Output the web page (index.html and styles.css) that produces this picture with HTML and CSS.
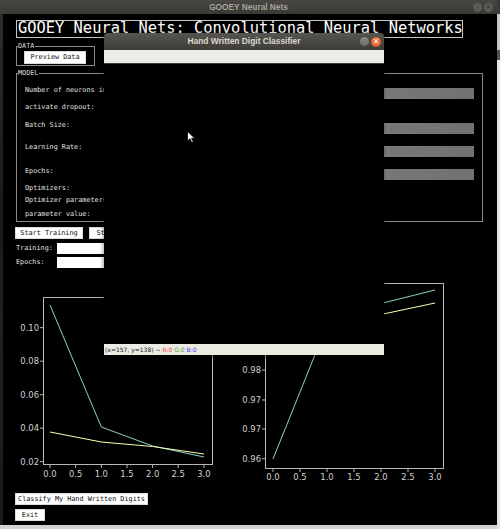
FILE: index.html
```html
<!DOCTYPE html>
<html>
<head>
<meta charset="utf-8">
<title>GOOEY Neural Nets</title>
<link rel="stylesheet" href="styles.css">
</head>
<body>
<div class="screen">
  <div class="main-col">
    <header class="titlebar">
      <span></span>
      <span class="title">GOOEY Neural Nets</span>
      <span class="wbtns"><span class="wbtn">&#8211;</span><span class="wbtn">&#215;</span></span>
    </header>
    <div class="win">
      <div class="edge-left"></div>
      <main class="content">
        <h1 class="heading">GOOEY Neural Nets: Convolutional Neural Networks</h1>

        <section class="frame data-frame">
          <span class="legend">DATA</span>
          <button class="btn preview">Preview Data</button>
        </section>

        <section class="frame model-frame">
          <span class="legend">MODEL</span>
          <div class="row h17"><span class="lbl">Number of neurons in hidden layer:</span><span class="bar"></span></div>
          <div class="row h18"><span class="lbl">activate dropout:</span></div>
          <div class="row h22"><span class="lbl">Batch Size:</span><span class="bar"></span></div>
          <div class="row h24"><span class="lbl">Learning Rate:</span><span class="bar low"></span></div>
          <div class="row h17"><span class="lbl">Epochs:</span><span class="bar"></span></div>
          <div class="row h12"><span class="lbl">Optimizers:</span></div>
          <div class="row h14"><span class="lbl">Optimizer parameters:</span></div>
          <div class="row h12"><span class="lbl">parameter value:</span></div>
        </section>

        <div class="actions">
          <button class="btn start">Start Training</button>
          <button class="btn start">Stop Training</button>
        </div>

        <div class="progress first"><span class="plabel">Training:</span><span class="pbox"></span></div>
        <div class="progress"><span class="plabel">Epochs:</span><span class="pbox"></span></div>

        <div class="charts">
          <svg class="chart" width="230" height="214" viewBox="0 0 230 214">
            <rect x="40.5" y="29.5" width="169" height="167" fill="none" stroke="#b8b8b8" stroke-width="1"/>
            <g stroke="#b8b8b8" stroke-width="1">
              <line x1="37" y1="193.7" x2="40" y2="193.7"/>
              <line x1="37" y1="160.2" x2="40" y2="160.2"/>
              <line x1="37" y1="126.7" x2="40" y2="126.7"/>
              <line x1="37" y1="93.2" x2="40" y2="93.2"/>
              <line x1="37" y1="59.7" x2="40" y2="59.7"/>
              <line x1="47" y1="197" x2="47" y2="200"/>
              <line x1="72.6" y1="197" x2="72.6" y2="200"/>
              <line x1="98.3" y1="197" x2="98.3" y2="200"/>
              <line x1="124" y1="197" x2="124" y2="200"/>
              <line x1="149.6" y1="197" x2="149.6" y2="200"/>
              <line x1="175.2" y1="197" x2="175.2" y2="200"/>
              <line x1="200.9" y1="197" x2="200.9" y2="200"/>
            </g>
            <g class="tick" text-anchor="end">
              <text x="36" y="196.7">0.02</text>
              <text x="36" y="163.2">0.04</text>
              <text x="36" y="129.7">0.06</text>
              <text x="36" y="96.2">0.08</text>
              <text x="36" y="62.7">0.10</text>
            </g>
            <g class="tick" text-anchor="middle">
              <text x="47" y="209">0.0</text>
              <text x="72.6" y="209">0.5</text>
              <text x="98.3" y="209">1.0</text>
              <text x="124" y="209">1.5</text>
              <text x="149.6" y="209">2.0</text>
              <text x="175.2" y="209">2.5</text>
              <text x="200.9" y="209">3.0</text>
            </g>
            <polyline points="47,37 98.3,159 149.6,178 201,189" fill="none" stroke="#8dd3c7" stroke-width="1"/>
            <polyline points="47,164 98.3,174 149.6,178.5 201,186" fill="none" stroke="#feffb3" stroke-width="1"/>
          </svg>
          <svg class="chart" width="264" height="214" viewBox="0 0 264 214">
            <rect x="32.5" y="15.5" width="178" height="185" fill="none" stroke="#b8b8b8" stroke-width="1"/>
            <g stroke="#b8b8b8" stroke-width="1">
              <line x1="29" y1="102" x2="32" y2="102"/>
              <line x1="29" y1="132" x2="32" y2="132"/>
              <line x1="29" y1="161" x2="32" y2="161"/>
              <line x1="29" y1="190.7" x2="32" y2="190.7"/>
              <line x1="40" y1="201" x2="40" y2="204"/>
              <line x1="67" y1="201" x2="67" y2="204"/>
              <line x1="94" y1="201" x2="94" y2="204"/>
              <line x1="121" y1="201" x2="121" y2="204"/>
              <line x1="148" y1="201" x2="148" y2="204"/>
              <line x1="175" y1="201" x2="175" y2="204"/>
              <line x1="202" y1="201" x2="202" y2="204"/>
            </g>
            <g class="tick" text-anchor="end">
              <text x="28" y="105">0.98</text>
              <text x="28" y="135">0.97</text>
              <text x="28" y="164">0.97</text>
              <text x="28" y="193.7">0.96</text>
            </g>
            <g class="tick" text-anchor="middle">
              <text x="40" y="212">0.0</text>
              <text x="67" y="212">0.5</text>
              <text x="94" y="212">1.0</text>
              <text x="121" y="212">1.5</text>
              <text x="148" y="212">2.0</text>
              <text x="175" y="212">2.5</text>
              <text x="202" y="212">3.0</text>
            </g>
            <polyline points="40,191 94,57 148,35.5 202,22" fill="none" stroke="#8dd3c7" stroke-width="1"/>
            <polyline points="40,70 94,55 148,46.5 202,35" fill="none" stroke="#feffb3" stroke-width="1"/>
          </svg>
        </div>

        <button class="btn classify">Classify My Hand Written Digits</button>
        <button class="btn exit">Exit</button>
      </main>
    </div>
    <div class="bottom-edge"></div>
  </div>
  <div class="edge-right"></div>
</div>

<div class="dialog">
  <div class="dtitle">
    <span></span>
    <span class="dname">Hand Written Digit Classifier</span>
    <span class="dbtns"><span class="dmin"></span><span class="dclose">&#215;</span></span>
  </div>
  <div class="dtool"></div>
  <div class="dcanvas"></div>
  <div class="dstatus">(x=157, y=138) ~ <span class="cr">R:0</span> <span class="cg">G:0</span> <span class="cb">B:0</span></div>
</div>

<svg class="cursor" width="9" height="13" viewBox="0 0 9 13">
  <path d="M0.5 0.5 L0.5 10 L3 7.8 L4.8 11.8 L6.3 11.1 L4.6 7.3 L7.8 7.3 Z" fill="#ffffff" stroke="#000000" stroke-width="0.8"/>
</svg>
</body>
</html>
```

FILE: styles.css
```css
html, body {
  margin: 0;
  padding: 0;
}
body {
  width: 500px;
  height: 529px;
  overflow: hidden;
  position: relative;
  background: #d7d6d1;
  font-family: "DejaVu Sans Mono", monospace;
}
.screen {
  display: flex;
  height: 529px;
}
.main-col {
  width: 497px;
  display: flex;
  flex-direction: column;
}
.titlebar {
  height: 14px;
  flex: none;
  display: grid;
  grid-template-columns: 1fr auto 1fr;
  align-items: center;
  background: linear-gradient(#47463f, #3a3935);
}
.title {
  font-family: "Liberation Sans", Arial, sans-serif;
  font-weight: bold;
  font-size: 8.3px;
  color: #a6a5a0;
  line-height: 14px;
}
.wbtns {
  justify-self: end;
  display: flex;
  gap: 2px;
  padding-right: 4px;
}
.wbtn {
  width: 9px;
  height: 9px;
  border-radius: 50%;
  background: #5c5b56;
  color: #3d3c38;
  font-family: "DejaVu Sans", sans-serif;
  font-size: 7px;
  line-height: 9px;
  text-align: center;
  font-weight: bold;
}
.win {
  flex: 1;
  display: flex;
  background: #000;
}
.bottom-edge {
  height: 4px;
  flex: none;
  background: #d3d2cd;
}
.edge-left {
  width: 3px;
  flex: none;
  background: linear-gradient(#2c2c2c, #1a1a1a 40%, #262020 60%, #1a1a1a);
}
.edge-right {
  width: 3px;
  background: linear-gradient(#3a3935 0, #3a3935 14px, #c9c8c3 14px, #c9c8c3 50px, #53524e 50px, #53524e 60px, #e4e3de 60px);
}
.content {
  flex: 1;
  display: flex;
  flex-direction: column;
  align-items: flex-start;
  color: #e6e6e6;
}
.heading {
  margin: 6px 0 0 13px;
  box-sizing: border-box;
  width: 447px;
  height: 18px;
  border: 1px solid #c8c8c8;
  font-family: "DejaVu Sans Mono", monospace;
  font-weight: normal;
  font-size: 15.4px;
  line-height: 15px;
  color: #ffffff;
  padding-left: 1px;
  white-space: nowrap;
  overflow: hidden;
}
.frame {
  position: relative;
  box-sizing: border-box;
  border: 1px solid #8a8a8a;
}
.legend {
  position: absolute;
  top: -5px;
  left: 1px;
  background: #000;
  color: #dddddd;
  font-size: 6.8px;
  line-height: 8px;
  padding: 0 1px 0 0;
}
.data-frame {
  margin: 8px 0 0 13px;
  width: 79px;
  height: 20px;
  padding: 4px 0 0 7px;
}
.btn {
  box-sizing: border-box;
  background: #ffffff;
  border: 1px solid #dcdcdc;
  color: #111;
  font-family: "DejaVu Sans Mono", monospace;
  font-size: 6.8px;
  padding: 0;
  margin: 0;
  text-align: center;
  white-space: nowrap;
  overflow: hidden;
  display: block;
}
.preview {
  width: 62px;
  height: 13px;
  line-height: 11px;
}
.model-frame {
  margin: 7px 0 0 13px;
  width: 467px;
  height: 149px;
  padding: 10px 8px 0 8px;
  display: flex;
  flex-direction: column;
}
.row {
  display: flex;
  justify-content: space-between;
  align-items: flex-start;
}
.lbl {
  font-size: 6.8px;
  line-height: 12px;
  color: #e0e0e0;
  white-space: nowrap;
}
.h12 { height: 12px; }
.h14 { height: 14px; }
.h17 { height: 17px; }
.h18 { height: 18px; }
.h22 { height: 22px; }
.h24 { height: 24px; }
.bar {
  width: 90px;
  height: 11px;
  margin-top: 4px;
  background: linear-gradient(90deg, #8c8c8c, #767676 6px, #727272);
}
.bar.low {
  margin-top: 5px;
}
.actions {
  margin: 5px 0 0 12px;
  display: flex;
  gap: 6px;
}
.start {
  width: 68px;
  height: 12px;
  line-height: 10px;
}
.progress {
  margin: 3px 0 0 13px;
  display: flex;
  align-items: center;
  height: 11px;
}
.progress.first {
  margin-top: 4px;
}
.plabel {
  width: 41px;
  font-size: 6.8px;
  line-height: 11px;
  color: #e0e0e0;
}
.pbox {
  width: 110px;
  height: 11px;
  background: #ffffff;
}
.charts {
  display: flex;
  height: 214px;
}
.chart {
  display: block;
  flex: none;
}
.tick {
  font-family: "DejaVu Sans", sans-serif;
  font-size: 8.4px;
  fill: #d2d2d2;
}
.classify {
  margin: 11px 0 0 12px;
  width: 133px;
  height: 12px;
  line-height: 10px;
}
.exit {
  margin: 4px 0 0 12px;
  width: 30px;
  height: 12px;
  line-height: 10px;
}

/* overlaid dialog window */
.dialog {
  position: absolute;
  left: 104px;
  top: 33px;
  width: 280px;
  height: 322px;
  display: flex;
  flex-direction: column;
  box-shadow: 0 1px 5px rgba(0, 0, 0, 0.55);
  border-radius: 4px 4px 0 0;
  overflow: hidden;
}
.dtitle {
  height: 17px;
  flex: none;
  display: grid;
  grid-template-columns: 1fr auto 1fr;
  align-items: center;
  background: linear-gradient(#56554f, #3d3c38);
}
.dname {
  font-family: "Liberation Sans", Arial, sans-serif;
  font-weight: bold;
  font-size: 8.4px;
  color: #dcd9d0;
  line-height: 17px;
}
.dbtns {
  justify-self: end;
  display: flex;
  gap: 2px;
  padding-right: 3px;
  align-items: center;
}
.dmin {
  width: 9px;
  height: 9px;
  border-radius: 50%;
  background: linear-gradient(#8a8984, #6d6c67);
}
.dclose {
  width: 10px;
  height: 10px;
  border-radius: 50%;
  background: radial-gradient(circle at 50% 35%, #f48553, #dd4814);
  color: #fff;
  font-family: "DejaVu Sans", sans-serif;
  font-size: 8px;
  line-height: 10px;
  text-align: center;
}
.dtool {
  height: 13px;
  flex: none;
  background: #ecebe5;
  border-bottom: 1px solid #3a3a3a;
}
.dcanvas {
  flex: 1;
  background: #000;
}
.dstatus {
  height: 11px;
  flex: none;
  background: #ebeae3;
  font-family: "DejaVu Sans", sans-serif;
  font-size: 6px;
  line-height: 11px;
  color: #222;
  padding-left: 1px;
  white-space: nowrap;
}
.cr { color: #ff3b30; }
.cg { color: #3aa53a; }
.cb { color: #3a3aff; }
.cursor {
  position: absolute;
  left: 187px;
  top: 131px;
}
```
